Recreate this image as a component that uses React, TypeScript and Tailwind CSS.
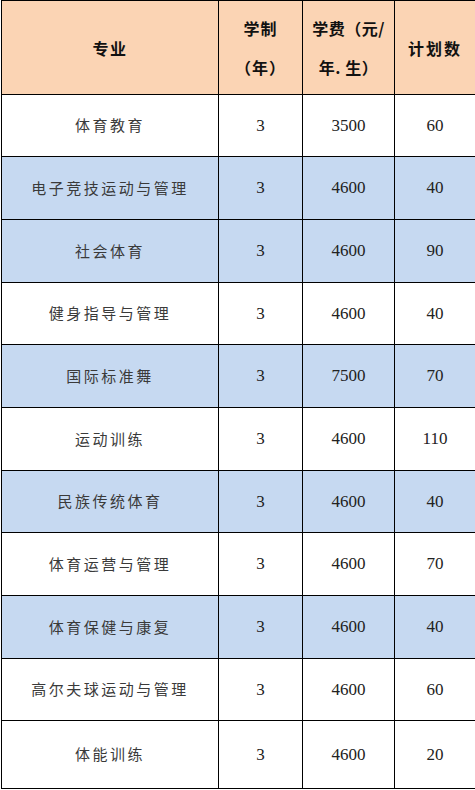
import React from 'react';

type Row = {
  name: string;
  years: string;
  fee: string;
  plan: string;
  blue: boolean;
  h: string;
};

const rows: Row[] = [
  { name: '体育教育', years: '3', fee: '3500', plan: '60', blue: false, h: 'h-[62px]' },
  { name: '电子竞技运动与管理', years: '3', fee: '4600', plan: '40', blue: true, h: 'h-[63px]' },
  { name: '社会体育', years: '3', fee: '4600', plan: '90', blue: true, h: 'h-[63px]' },
  { name: '健身指导与管理', years: '3', fee: '4600', plan: '40', blue: false, h: 'h-[62px]' },
  { name: '国际标准舞', years: '3', fee: '7500', plan: '70', blue: true, h: 'h-[63px]' },
  { name: '运动训练', years: '3', fee: '4600', plan: '110', blue: false, h: 'h-[63px]' },
  { name: '民族传统体育', years: '3', fee: '4600', plan: '40', blue: true, h: 'h-[62px]' },
  { name: '体育运营与管理', years: '3', fee: '4600', plan: '70', blue: false, h: 'h-[63px]' },
  { name: '体育保健与康复', years: '3', fee: '4600', plan: '40', blue: true, h: 'h-[63px]' },
  { name: '高尔夫球运动与管理', years: '3', fee: '4600', plan: '60', blue: false, h: 'h-[62px]' },
  { name: '体能训练', years: '3', fee: '4600', plan: '20', blue: false, h: 'h-[68px]' },
];

const cjk = "font-['Noto_Sans_CJK_SC',sans-serif]";
const num = "font-['Liberation_Serif',serif] text-[17px] text-[#222]";

export default function App() {
  return (
    <div className="w-[475px] h-[790px] bg-white">
      <table className="table-fixed border-collapse w-[474px] ml-px">
        <colgroup>
          <col className="w-[217px]" />
          <col className="w-[84px]" />
          <col className="w-[92px]" />
          <col className="w-[81px]" />
        </colgroup>
        <thead>
          <tr className="h-[94px] bg-[#fbd4b4]">
            <th className={`border border-black text-center align-middle ${cjk} text-[16px] font-bold tracking-[1.5px] text-[#111]`}>
              专业
            </th>
            <th className={`border border-black text-center align-middle ${cjk} text-[16px] font-bold tracking-[1px] leading-[39px] text-[#111]`}>
              <div>学制</div>
              <div>（年）</div>
            </th>
            <th className={`border border-black text-center align-middle ${cjk} text-[16px] font-bold tracking-[0.5px] leading-[39px] text-[#111]`}>
              <div>学费（元/</div>
              <div>年. 生）</div>
            </th>
            <th className={`border border-black text-center align-middle ${cjk} text-[16px] font-bold tracking-[2px] text-[#111]`}>
              计划数
            </th>
          </tr>
        </thead>
        <tbody>
          {rows.map((r) => (
            <tr key={r.name} className={`${r.h} ${r.blue ? 'bg-[#c6d9f1]' : 'bg-white'}`}>
              <td className={`border border-black text-center align-middle ${cjk} text-[15px] tracking-[2.5px] text-[#3a3a3a]`}>
                {r.name}
              </td>
              <td className={`border border-black text-center align-middle ${num}`}>{r.years}</td>
              <td className={`border border-black text-center align-middle ${num}`}>{r.fee}</td>
              <td className={`border border-black text-center align-middle ${num}`}>{r.plan}</td>
            </tr>
          ))}
        </tbody>
      </table>
    </div>
  );
}
